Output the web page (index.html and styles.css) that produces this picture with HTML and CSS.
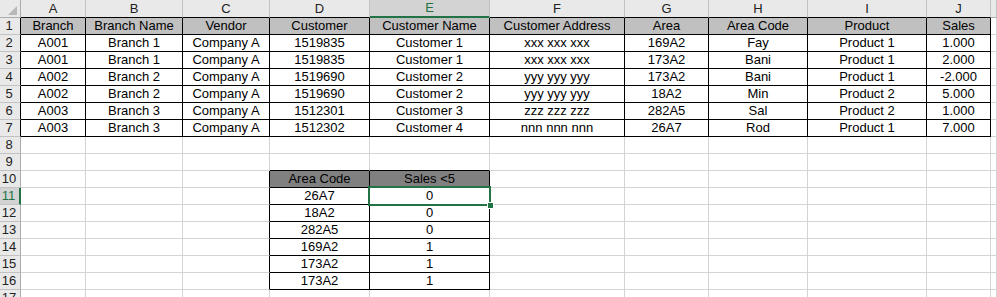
FILE: index.html
```html
<!DOCTYPE html>
<html>
<head>
<meta charset="utf-8">
<link rel="stylesheet" href="styles.css">
</head>
<body>
<div class="sheet">
  <span class="corner"><svg width="21" height="18" viewBox="0 0 21 18"><polygon points="17,6 17,15 8,15" fill="#b8b8b8"/></svg></span>
  <span class="ch kb">A</span><span class="ch kb">B</span><span class="ch kb">C</span><span class="ch kb">D</span><span class="ch sel-col">E</span><span class="ch kb">F</span><span class="ch kb">G</span><span class="ch kb">H</span><span class="ch kb">I</span><span class="ch kb">J</span><span class="ch"></span>

  <span class="rh kr">1</span><span class="k t1">Branch</span><span class="k t1">Branch Name</span><span class="k t1">Vendor</span><span class="k t1">Customer</span><span class="k t1">Customer Name</span><span class="k t1">Customer Address</span><span class="k t1">Area</span><span class="k t1">Area Code</span><span class="k t1">Product</span><span class="k t1">Sales</span><span></span>

  <span class="rh kr">2</span><span class="k">A001</span><span class="k">Branch 1</span><span class="k">Company A</span><span class="k">1519835</span><span class="k">Customer 1</span><span class="k">xxx xxx xxx</span><span class="k">169A2</span><span class="k">Fay</span><span class="k">Product 1</span><span class="k">1.000</span><span></span>

  <span class="rh kr">3</span><span class="k">A001</span><span class="k">Branch 1</span><span class="k">Company A</span><span class="k">1519835</span><span class="k">Customer 1</span><span class="k">xxx xxx xxx</span><span class="k">173A2</span><span class="k">Bani</span><span class="k">Product 1</span><span class="k">2.000</span><span></span>

  <span class="rh kr">4</span><span class="k">A002</span><span class="k">Branch 2</span><span class="k">Company A</span><span class="k">1519690</span><span class="k">Customer 2</span><span class="k">yyy yyy yyy</span><span class="k">173A2</span><span class="k">Bani</span><span class="k">Product 1</span><span class="k">-2.000</span><span></span>

  <span class="rh kr">5</span><span class="k">A002</span><span class="k">Branch 2</span><span class="k">Company A</span><span class="k">1519690</span><span class="k">Customer 2</span><span class="k">yyy yyy yyy</span><span class="k">18A2</span><span class="k">Min</span><span class="k">Product 2</span><span class="k">5.000</span><span></span>

  <span class="rh kr">6</span><span class="k">A003</span><span class="k">Branch 3</span><span class="k">Company A</span><span class="k">1512301</span><span class="k">Customer 3</span><span class="k">zzz zzz zzz</span><span class="k">282A5</span><span class="k">Sal</span><span class="k">Product 2</span><span class="k">1.000</span><span></span>

  <span class="rh kr">7</span><span class="k">A003</span><span class="k">Branch 3</span><span class="k">Company A</span><span class="k">1512302</span><span class="k">Customer 4</span><span class="k">nnn nnn nnn</span><span class="k">26A7</span><span class="k">Rod</span><span class="k">Product 1</span><span class="k">7.000</span><span></span>

  <span class="rh">8</span><span></span><span></span><span></span><span></span><span></span><span></span><span></span><span></span><span></span><span></span><span></span>

  <span class="rh">9</span><span></span><span></span><span></span><span class="kb"></span><span class="kb"></span><span></span><span></span><span></span><span></span><span></span><span></span>

  <span class="rh">10</span><span></span><span></span><span class="kr"></span><span class="k t2">Area Code</span><span class="k t2">Sales &lt;5</span><span></span><span></span><span></span><span></span><span></span><span></span>

  <span class="rh sel-row">11</span><span></span><span></span><span class="kr"></span><span class="k">26A7</span><span class="k active">0<b class="cursor"><i class="handle"></i></b></span><span></span><span></span><span></span><span></span><span></span><span></span>

  <span class="rh">12</span><span></span><span></span><span class="kr"></span><span class="k">18A2</span><span class="k">0</span><span></span><span></span><span></span><span></span><span></span><span></span>

  <span class="rh">13</span><span></span><span></span><span class="kr"></span><span class="k">282A5</span><span class="k">0</span><span></span><span></span><span></span><span></span><span></span><span></span>

  <span class="rh">14</span><span></span><span></span><span class="kr"></span><span class="k">169A2</span><span class="k">1</span><span></span><span></span><span></span><span></span><span></span><span></span>

  <span class="rh">15</span><span></span><span></span><span class="kr"></span><span class="k">173A2</span><span class="k">1</span><span></span><span></span><span></span><span></span><span></span><span></span>

  <span class="rh">16</span><span></span><span></span><span class="kr"></span><span class="k">173A2</span><span class="k">1</span><span></span><span></span><span></span><span></span><span></span><span></span>

  <span class="rh">17</span><span></span><span></span><span></span><span></span><span></span><span></span><span></span><span></span><span></span><span></span><span></span>
</div>
</body>
</html>
```

FILE: styles.css
```css
html, body {
  margin: 0;
  padding: 0;
  background: #ffffff;
  overflow: hidden;
}

.sheet {
  display: grid;
  grid-template-columns: 21px 65px 97px 87px 100px 120px 135px 84px 99px 119px 64px 6px;
  grid-template-rows: 18px;
  grid-auto-rows: 17px;
  font-family: "Liberation Sans", Arial, sans-serif;
  font-size: 13px;
  color: #000;
  width: 997px;
}

.sheet > span {
  box-sizing: border-box;
  border-right: 1px solid #d4d4d4;
  border-bottom: 1px solid #d4d4d4;
  line-height: 16px;
  text-align: center;
  white-space: nowrap;
  overflow: visible;
}

.sheet > .corner {
  background: #e9e9e9;
  border-right-color: #ababab;
  border-bottom-color: #ababab;
  line-height: 0;
  overflow: hidden;
}

.sheet > .ch {
  background: #e9e9e9;
  border-right-color: #c2c2c2;
  border-bottom-color: #ababab;
  line-height: 17px;
  color: #222;
}

.sheet > .rh {
  background: #e9e9e9;
  border-right-color: #ababab;
  border-bottom-color: #c2c2c2;
  color: #222;
  padding-right: 2px;
}

.sheet > .sel-col {
  background: #d3d3d3;
  color: #217346;
  border-bottom: 2px solid #217346;
  line-height: 16px;
}

.sheet > .sel-row {
  background: #d3d3d3;
  color: #217346;
  border-right: 2px solid #217346;
}

.sheet > .k {
  border-right-color: #000;
  border-bottom-color: #000;
}

.sheet > .kb {
  border-bottom-color: #000;
}

.sheet > .kr {
  border-right-color: #000;
}

.sheet > .t1 {
  background: #c0c0c0;
}

.sheet > .t2 {
  background: #808080;
}

.sheet > .active {
  position: relative;
}

.cursor {
  position: absolute;
  top: -2px;
  left: -2px;
  right: -2px;
  bottom: -2px;
  border: 2px solid #217346;
  pointer-events: none;
}

.handle {
  position: absolute;
  right: -5px;
  bottom: -5px;
  width: 5px;
  height: 5px;
  background: #217346;
  border: 1px solid #ffffff;
}
```
